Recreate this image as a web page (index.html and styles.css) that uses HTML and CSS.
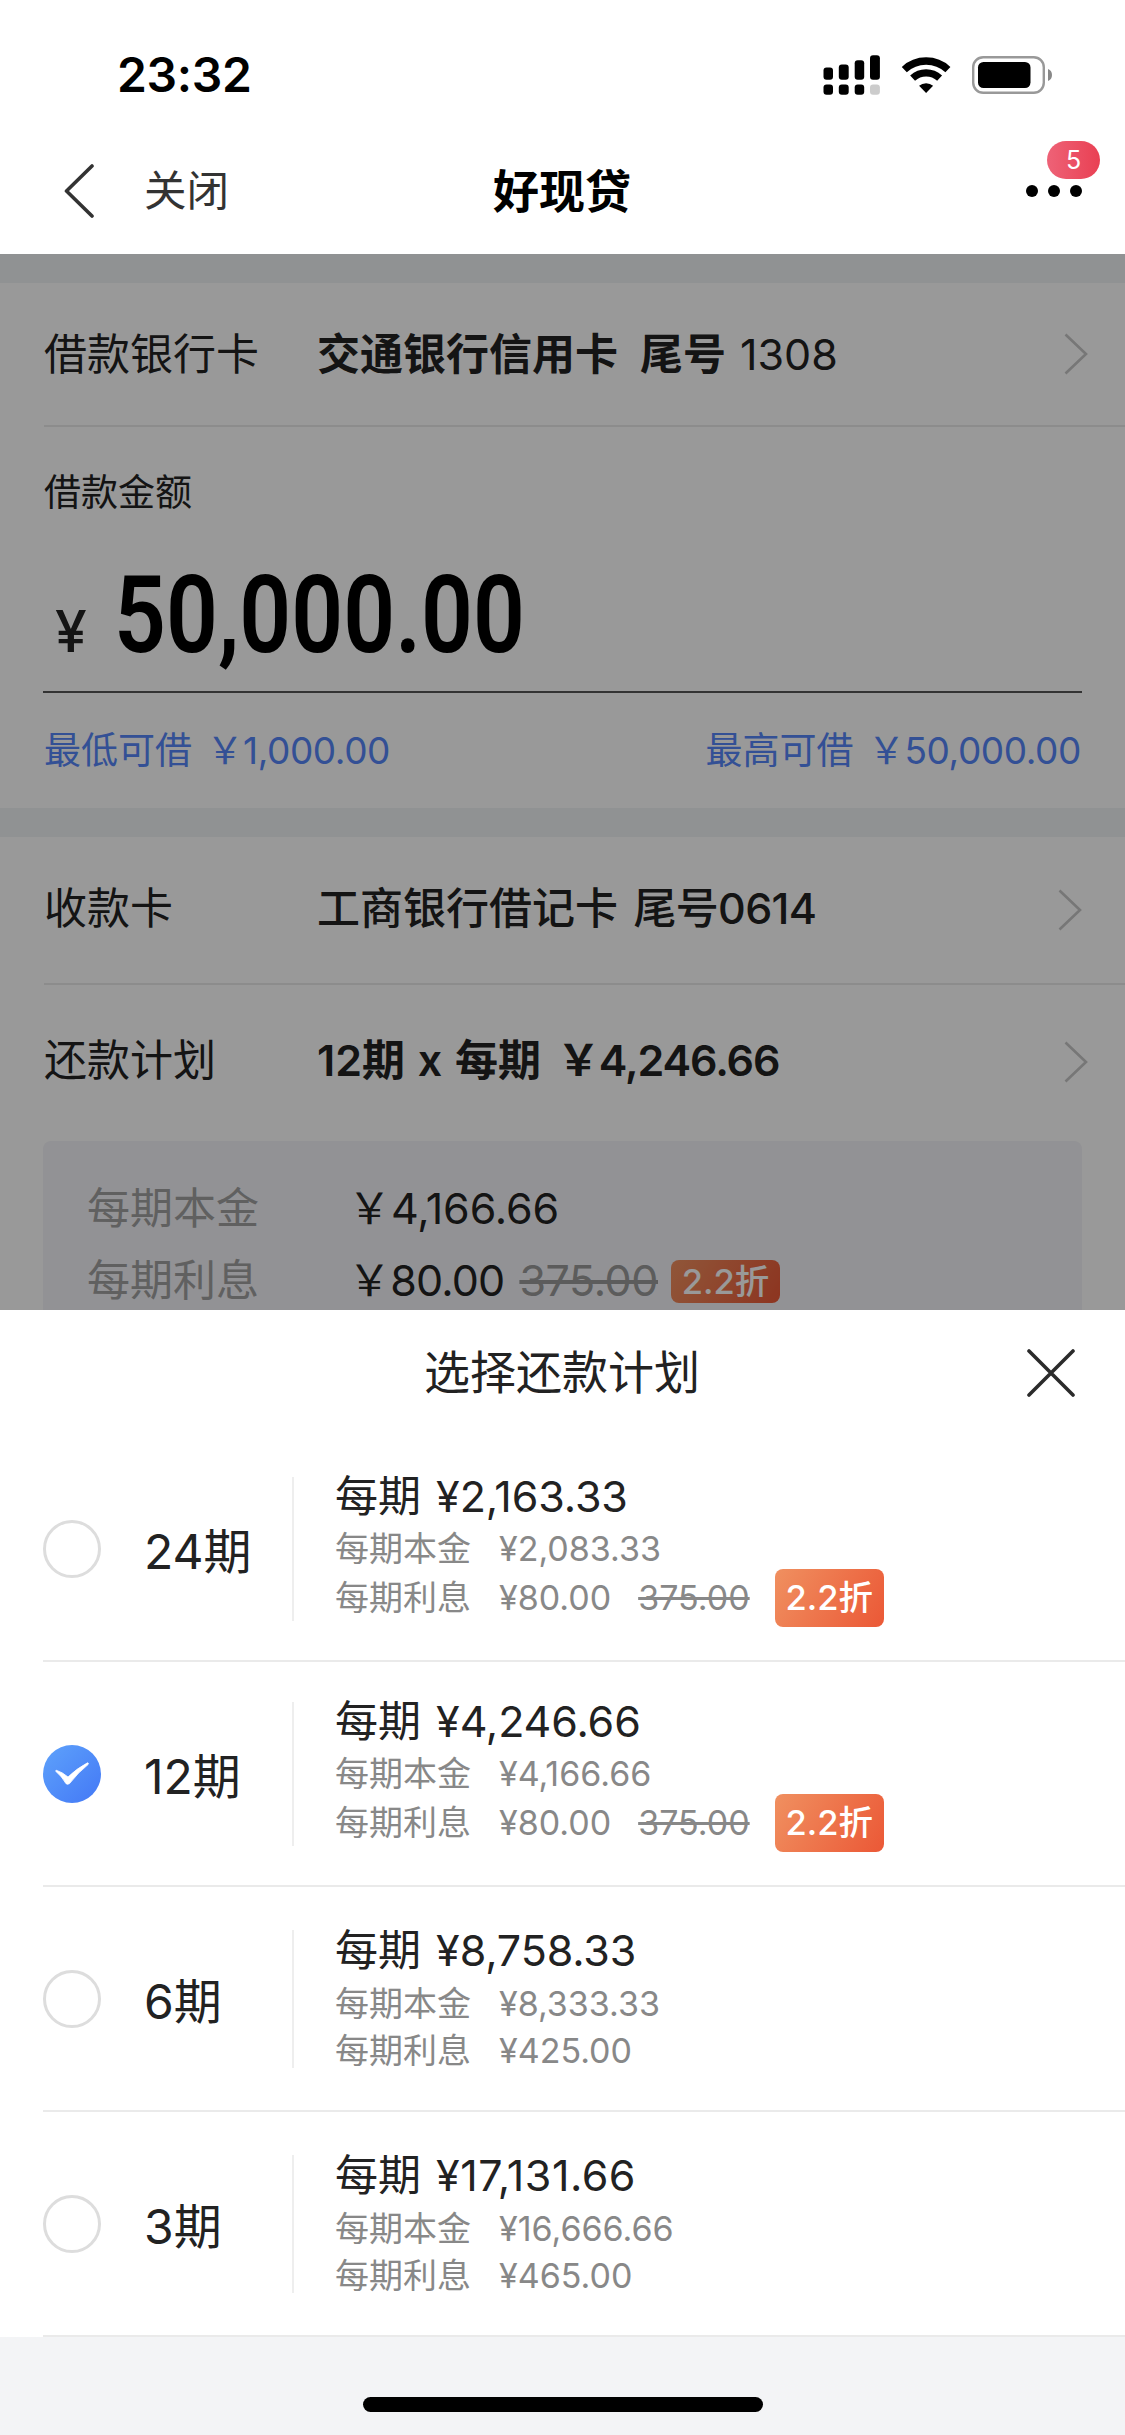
FILE: index.html
```html
<!DOCTYPE html>
<html lang="zh-CN">
<head>
<meta charset="utf-8">
<title>好现贷</title>
<link rel="stylesheet" href="styles.css">
</head>
<body>
<header class="header">
  <div class="status">
    <div class="time">23:32</div>
    <svg class="status-icons" width="232" height="42" viewBox="822 54 232 42">
      <g fill="#000">
        <rect x="823.5" y="67.5" width="9.5" height="12.3" rx="3"/>
        <rect x="838.8" y="64.5" width="9.9" height="15.3" rx="3"/>
        <rect x="854.7" y="60.3" width="9.5" height="19.5" rx="3"/>
        <rect x="870" y="55.3" width="9.9" height="24.5" rx="3"/>
        <rect x="823.5" y="84.5" width="9.5" height="10.3" rx="3"/>
        <rect x="838.8" y="84.5" width="9.9" height="10.3" rx="3"/>
        <rect x="854.7" y="84.5" width="9.5" height="10.3" rx="3"/>
      </g>
      <rect x="870" y="84.5" width="9.9" height="10.3" rx="3" fill="#ccc"/>
      <g fill="none" stroke="#000">
        <path d="M904.3 69.6a32 32 0 0 1 43.6 0" stroke-width="7.4"/>
        <path d="M912.6 78.2a20 20 0 0 1 27 0" stroke-width="7.2"/>
      </g>
      <path d="M926.1 93l-7-7.2a10.5 10.5 0 0 1 14 0z" fill="#000"/>
      <rect x="973.2" y="57.2" width="70.6" height="35.6" rx="10" fill="#fff" stroke="#999" stroke-width="2.4"/>
      <rect x="978" y="62" width="52.5" height="26" rx="5.5" fill="#000"/>
      <path d="M1048 69a6.5 6.5 0 0 1 0 12z" fill="#888"/>
    </svg>
  </div>
  <nav class="nav">
    <div class="nav-left">
      <svg width="32" height="54" viewBox="0 0 32 54"><path d="M29 2L3.500 27 29 52" fill="none" stroke="#333" stroke-width="3.6" stroke-linecap="round" stroke-linejoin="round"/></svg>
      <span>关闭</span>
    </div>
    <h1 class="nav-title">好现贷</h1>
    <div class="more">
      <i></i><i></i><i></i>
      <span class="count">5</span>
    </div>
  </nav>
</header>

<main class="page">
  <section class="row row-first">
    <span class="label">借款银行卡</span>
    <span class="value"><b>交通银行信用卡</b><b class="tail">尾号</b>1308</span>
    <svg class="chev" width="24" height="42" viewBox="0 0 24 42"><path d="M1.500 1.500L22 21 1.500 40.500" fill="none" stroke="#c6c6c6" stroke-width="2.600"/></svg>
  </section>
  <section class="amount">
    <div class="amount-label">借款金额</div>
    <div class="amount-value"><span class="yen">¥</span><span class="digits">50,000.00</span></div>
    <div class="limits"><span>最低可借 <span class="money">￥1,000.00</span></span><span>最高可借 <span class="money">￥50,000.00</span></span></div>
  </section>
  <section class="row row-card">
    <span class="label">收款卡</span>
    <span class="value medium">工商银行借记卡 <span class="tail-plain">尾号0614</span></span>
    <svg class="chev near" width="24" height="42" viewBox="0 0 24 42"><path d="M1.500 1.500L22 21 1.500 40.500" fill="none" stroke="#c6c6c6" stroke-width="2.600"/></svg>
  </section>
  <section class="row row-plan">
    <span class="label">还款计划</span>
    <span class="value plan-value"><b>12期 x 每期 <span class="money">￥4,246.66</span></b></span>
    <svg class="chev" width="24" height="42" viewBox="0 0 24 42"><path d="M1.500 1.500L22 21 1.500 40.500" fill="none" stroke="#c6c6c6" stroke-width="2.600"/></svg>
  </section>
  <section class="breakdown">
    <div class="line"><span class="key">每期本金</span><span class="num principal">￥4,166.66</span></div>
    <div class="line"><span class="key">每期利息</span><span class="num">￥80.00</span><s>375.00</s><span class="tag small">2.2折</span></div>
  </section>
  <div class="dim"></div>
</main>

<section class="sheet">
  <div class="sheet-head">
    <h2>选择还款计划</h2>
    <svg class="close" width="48" height="48" viewBox="0 0 48 48"><path d="M2 2L46 46M46 2L2 46" fill="none" stroke="#2b2b2b" stroke-width="3.600" stroke-linecap="round"/></svg>
  </div>
  <div class="plan">
    <span class="radio"></span>
    <span class="term">24期</span>
    <div class="detail">
      <div class="total">每期 <span>¥2,163.33</span></div>
      <div class="sub"><span class="k">每期本金</span><span>¥2,083.33</span></div>
      <div class="sub interest"><span class="k">每期利息</span><span class="n">¥80.00</span><s>375.00</s><span class="tag">2.2折</span></div>
    </div>
  </div>
  <div class="plan">
    <svg class="radio-on" width="58" height="58" viewBox="0 0 58 58">
      <defs><linearGradient id="blue" x1="0" y1="0" x2="1" y2="1"><stop offset="0" stop-color="#5ea2fb"/><stop offset="1" stop-color="#4378f6"/></linearGradient></defs>
      <circle cx="29" cy="29" r="29" fill="url(#blue)"/>
      <path d="M13.200 25.200Q19.500 27.200 25 32Q33 24 44.500 17.800Q46 18 45 19.600Q35 27.500 26.500 38.600Q24.500 40 22.800 38.400Q19 31.500 13 26.500Q12.500 25.500 13.200 25.200z" fill="#fff" stroke="#fff" stroke-width=".8"/>
    </svg>
    <span class="term">12期</span>
    <div class="detail">
      <div class="total">每期 <span>¥4,246.66</span></div>
      <div class="sub"><span class="k">每期本金</span><span>¥4,166.66</span></div>
      <div class="sub interest"><span class="k">每期利息</span><span class="n">¥80.00</span><s>375.00</s><span class="tag">2.2折</span></div>
    </div>
  </div>
  <div class="plan">
    <span class="radio"></span>
    <span class="term">6期</span>
    <div class="detail short">
      <div class="total">每期 <span>¥8,758.33</span></div>
      <div class="sub"><span class="k">每期本金</span><span>¥8,333.33</span></div>
      <div class="sub interest"><span class="k">每期利息</span><span>¥425.00</span></div>
    </div>
  </div>
  <div class="plan">
    <span class="radio"></span>
    <span class="term">3期</span>
    <div class="detail short">
      <div class="total">每期 <span class="wide">¥17,131.66</span></div>
      <div class="sub"><span class="k">每期本金</span><span>¥16,666.66</span></div>
      <div class="sub interest"><span class="k">每期利息</span><span>¥465.00</span></div>
    </div>
  </div>
</section>
<footer class="home"><div class="home-bar"></div></footer>
</body>
</html>
```
FILE: styles.css
```css
* { box-sizing: border-box; }
body {
  margin: 0;
  width: 1125px;
  height: 2435px;
  overflow: hidden;
  background: #fff;
  color: #222;
  font-family: Inter, "Noto Sans CJK SC", sans-serif;
  font-size: 43px;
  line-height: 60px;
  white-space: nowrap;
  display: flex;
  flex-direction: column;
}
h1, h2 { margin: 0; }
b { font-weight: 600; }
svg { display: block; flex: none; }

/* Header */
.header { height: 254px; flex: none; }
.status {
  height: 128px;
  padding: 22px 71.500px 0 117px;
  display: flex;
  justify-content: space-between;
  align-items: center;
}
.time { font-size: 48px; font-weight: 600; color: #000; letter-spacing: -.3px; }
.nav {
  height: 126px;
  padding: 0 43px 0 63px;
  display: grid;
  grid-template-columns: 430px auto 1fr;
  align-items: center;
}
.nav-left { display: flex; align-items: center; gap: 49px; font-size: 42.500px; color: #333; }
.nav-title { font-size: 46px; font-weight: 600; color: #000; }
.more { position: relative; justify-self: end; display: flex; gap: 10px; }
.more i { width: 12px; height: 12px; border-radius: 50%; background: #000; }
.count {
  position: absolute;
  right: -18px;
  top: -44px;
  width: 53px;
  height: 38px;
  border-radius: 19px;
  background: linear-gradient(90deg, #ee6277, #e94053);
  color: #fff;
  font-size: 25px;
  line-height: 38px;
  text-align: center;
}

/* Loan form */
.page {
  position: relative;
  height: 1056px;
  flex: none;
  overflow: hidden;
  padding-top: 29px;
  background: linear-gradient(#f1f3f5 29px, #fff 29px);
}
.dim { position: absolute; inset: 0; background: rgba(0, 0, 0, .4); }
.row { display: flex; align-items: center; margin-left: 44px; }
.row-first { height: 144px; border-bottom: 2px solid #e9e9e9; }
.row-card { height: 148px; padding-bottom: 4px; border-bottom: 2px solid #e9e9e9; }
.row-plan { height: 156px; padding-bottom: 6px; }
.row-card .chev, .row-plan .chev { margin-top: 3px; }
.label { width: 273px; }
.value { flex: 1; }
.tail { margin: 0 14px 0 22px; }
.medium { font-weight: 500; }
.tail-plain { margin-left: 4px; letter-spacing: -.7px; }
.chev { margin-right: 37px; }
.chev.near { margin-right: 43px; }
.amount { height: 410px; padding: 36px 43px 0; border-bottom: 29px solid #f1f3f5; }
.amount-label { font-size: 37px; padding-left: 1px; }
.amount-value {
  height: 170px;
  border-bottom: 2px solid #555;
  display: flex;
  align-items: baseline;
}
.yen { width: 71px; padding-left: 12px; font-size: 57px; font-weight: 500; line-height: 218px; }
.digits {
  font-family: Roboto, sans-serif;
  font-size: 107px;
  font-weight: 600;
  color: #000;
  transform: scaleX(.85);
  transform-origin: 0 50%;
}
.limits { margin: 28px 1px 0; display: flex; justify-content: space-between; font-size: 37px; color: #5585f8; }
.limits .money { margin-left: 4px; letter-spacing: -.4px; }
.plan-value .money { margin-left: 3px; letter-spacing: -1.100px; }
.plan-value { word-spacing: 2px; }
.breakdown {
  margin: 0 43px;
  height: 180px;
  padding: 31px 45px 0 44px;
  border-radius: 8px;
  background: #f4f4f8;
}
.line { display: flex; align-items: center; height: 72px; }
.key { width: 261px; color: #a0a0a0; }
.num { letter-spacing: -.8px; }
.principal { letter-spacing: -.1px; }
.line s { margin: 0 13px 0 15px; color: #999; letter-spacing: -.4px; }
.tag {
  width: 109px;
  height: 58px;
  border-radius: 8px;
  background: linear-gradient(120deg, #f09060, #eb5836);
  color: #fff;
  font-size: 34.500px;
  font-weight: 500;
  line-height: 58px;
  text-align: center;
}
.tag.small { height: 43px; line-height: 43px; margin-top: 2px; }

/* Repayment plan sheet */
.sheet { background: #fff; height: 1027px; flex: none; }
.sheet-head {
  height: 127px;
  padding: 0 50px 1px 424px;
  display: flex;
  justify-content: space-between;
  align-items: center;
}
.sheet-head h2 { font-size: 46px; font-weight: 400; margin-top: -2px; }
.plan {
  height: 225px;
  margin-left: 43px;
  border-bottom: 2px solid #eaeaea;
  display: flex;
  align-items: center;
}
.radio { width: 58px; height: 58px; border: 3px solid #ddd; border-radius: 50%; }
.term { width: 148px; margin-left: 43px; font-size: 48px; padding-top: 6px; }
.radio, .term { flex: none; }
.detail {
  height: 144px;
  padding-left: 41px;
  border-left: 2px solid #eee;
  display: grid;
  grid-template-rows: 38px 68px 31px;
  align-items: center;
}
.detail.short { height: 138px; grid-template-rows: 41px 66px 28px; }
.total, .sub, .interest { height: 0; line-height: 0; }
.total span { margin-left: 3px; letter-spacing: -.1px; }
.total .wide { letter-spacing: .5px; }
.sub { display: flex; align-items: center; font-size: 34px; color: #888; }
.sub .tag { flex: none; }
.k { width: 164px; }
.sub s { margin: 0 25px 0 27px; }

.home { flex: 1; background: #f3f4f6; display: flex; justify-content: center; padding-top: 60px; }
.home-bar { width: 400px; height: 15px; border-radius: 8px; background: #000; }
```
